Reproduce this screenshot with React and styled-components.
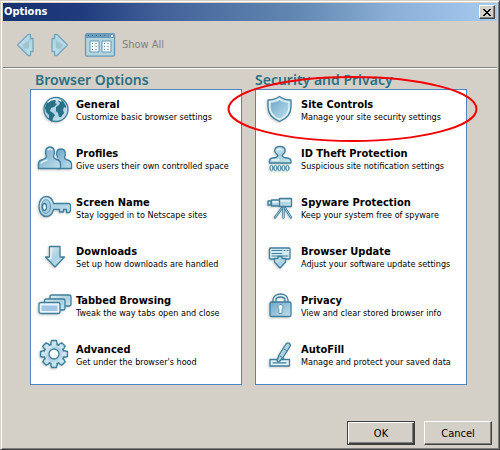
import React from "react";
import styled, { createGlobalStyle } from "styled-components";

const GlobalStyle = createGlobalStyle`
  *, *::before, *::after { box-sizing: border-box; }
  body { margin: 0; background: #d4d0c8; }
`;

const Dialog = styled.main`
  display: flex;
  flex-direction: column;
  min-height: 100vh;
  padding: 1px;
  background: #d4d0c8;
  border: 1px solid;
  border-color: #d4d0c8 #404040 #404040 #d4d0c8;
  box-shadow: inset 1px 1px #ffffff, inset -1px -1px #808080;
  font-family: "DejaVu Sans Condensed", "DejaVu Sans", sans-serif;
  color: #000000;
`;

const TitleBar = styled.header`
  display: flex;
  align-items: center;
  justify-content: space-between;
  height: 18px;
  margin: 1px;
  padding: 0 2px 0 1px;
  background: linear-gradient(90deg, #16316f 0%, #203c7e 16%, #426199 32%, #6289b2 60%, #8aaed5 78%, #a6caf0 100%);
`;

const Title = styled.h1`
  margin: 0;
  font-size: 11px;
  line-height: 18px;
  color: #ffffff;
`;

const CloseButton = styled.button`
  display: grid;
  place-items: center;
  width: 16px;
  height: 14px;
  padding: 0;
  background: #d4d0c8;
  border: 1px solid;
  border-color: #ffffff #404040 #404040 #ffffff;
  box-shadow: inset -1px -1px #808080;
`;

const Toolbar = styled.nav`
  display: flex;
  align-items: center;
  height: 46px;
  padding: 0 13px;
  margin: 0 1px;
  border-bottom: 1px solid #808080;
  box-shadow: 0 1px #ffffff;
`;

const ToolButton = styled.button`
  display: flex;
  align-items: center;
  gap: 6px;
  padding: 0;
  margin-right: ${(p) => p.$after || 0}px;
  background: none;
  border: 0;
  font-family: inherit;
  font-size: 11px;
  color: #808080;
`;

const Columns = styled.div`
  display: grid;
  grid-template-columns: 1fr 1fr;
  gap: 13px;
  padding: 3px 31px 0 28px;
`;

const Section = styled.section`
  position: relative;
`;

const Heading = styled.h2`
  margin: 0;
  padding-left: ${(p) => p.$inset}px;
  font-family: "Noto Sans", "DejaVu Sans", sans-serif;
  font-size: 14px;
  line-height: 18px;
  font-weight: 600;
  color: #2b7083;
  white-space: nowrap;
`;

const Panel = styled.ul`
  margin: 0;
  padding: 0;
  list-style: none;
  background: #ffffff;
  border: 1px solid #4b86c2;
`;

const Item = styled.li`
  height: 49px;
`;

const ItemLink = styled.a`
  display: flex;
  gap: 3px;
  padding: 2px 0 0 6px;
  color: inherit;
  text-decoration: none;
  white-space: nowrap;
`;

const ItemText = styled.span`
  display: flex;
  flex-direction: column;
  padding-top: 6px;
`;

const ItemTitle = styled.strong`
  font-size: 11px;
  line-height: 14px;
`;

const ItemNote = styled.span`
  font-size: 9px;
  line-height: 10px;
`;

const Highlight = styled.svg`
  position: absolute;
  left: -28px;
  top: 4px;
  width: 251px;
  height: 68px;
  pointer-events: none;
`;

const Footer = styled.footer`
  display: flex;
  justify-content: flex-end;
  gap: 9px;
  margin-top: auto;
  padding: 0 6px 3px;
`;

const PushButton = styled.button`
  width: 68px;
  height: 24px;
  padding: 0;
  background: #d4d0c8;
  border: 1px solid;
  border-color: ${(p) => (p.$primary ? "#404040" : "#ffffff #404040 #404040 #ffffff")};
  box-shadow: ${(p) =>
    p.$primary
      ? "inset 1px 1px #ffffff, inset -1px -1px #404040, inset -2px -2px #808080"
      : "inset -1px -1px #808080"};
  font-family: inherit;
  font-size: 11px;
`;

const IconSvg = styled.svg`
  flex: none;
  width: 36px;
  height: 36px;
  fill: url(#ice);
  stroke: #407f9b;
  stroke-width: 1.3;
  stroke-linejoin: round;
  stroke-linecap: round;
  filter: drop-shadow(-1px 1px 1px #00000030);
`;

const teeth = [0, 45, 90, 135, 180, 225, 270, 315];

const icons = {
  globe: (
    <>
      <circle cx="19" cy="17.500" r="12" />
      <g fill="#286f88" stroke="none">
        <path d="M9 12c2-3 5-5 8-5l2 2-1 2 2 1-3 3-3 1-1 3 3 2 2 2-2 3-1 4-3-3 0-4-3-3-1-4z" />
        <path d="M22 7l4 2 3 5 0 2-2-1-1 3 1 3-3 4-2 0-1-4-2-2 0-4 3-2 1-2-2-2z" />
      </g>
      <path d="M11 10c3-3 9-4 13-1" fill="none" stroke="#e8f5fa" />
    </>
  ),
  people: (
    <>
      <path d="M20 27.500h14.500v-4c0-3-2-4-4-4.500s-3-1-3-3c1.500-2 1.500-8-3.500-8s-5 5-3.500 8" fill="url(#deep)" />
      <path d="M1.500 27.500v-4.500c0-3 2-4 4.500-4.500 2-1 3-1 3.500-3-2-4-1-9.500 3.500-9.500s5.500 5.500 3.500 9.500c0 2 1.500 2 3 3 3 .5 4 1.500 4 4.500v4.500z" fill="url(#deep)" />
      <path d="M11 9c1-1.500 3-1.500 4 0M4 22c2-2 5-2 6-3" fill="none" stroke="#e8f5fa" />
    </>
  ),
  key: (
    <>
      <path d="M9.500 6.500c4 0 6 3 7 7h15.500q1.500 0 1.500 2v4q0 3-2 3h-2v-3h-3v2.500h-4v-2.500h-6c-1 4-3 7-7 7-4.500 0-7.500-4-7.500-10s3-10 7.500-10z" />
      <ellipse cx="9" cy="16.500" rx="4.500" ry="7" fill="#a9cde3" strokeWidth=".7" />
      <ellipse cx="7.500" cy="17" rx="2" ry="3.500" fill="#ffffff" />
    </>
  ),
  down: (
    <>
      <path d="M12.500 7.500h10.500v10.500h4.500l-9.500 10-9.500-10h4z" />
      <path d="M14 9.500v10h-2" fill="none" stroke="#eaf7fb" />
    </>
  ),
  tabs: (
    <>
      <rect x="13" y="7" width="21" height="11" rx="2" />
      <rect x="7.500" y="11" width="20.500" height="11" rx="2" />
      <rect x="2" y="14.500" width="21" height="11" rx="2" fill="#e9f5fb" />
      <rect x="4.500" y="17.500" width="16" height="5.500" fill="#9fc4e4" stroke="none" />
    </>
  ),
  gear: (
    <>
      {teeth.map((a) => (
        <path key={a} transform={`rotate(${a} 17 17)`} d="M13.500 8l1-4.500h5l1 4.500" />
      ))}
      <circle cx="17" cy="17" r="10" />
      {teeth.map((a) => (
        <path key={a} transform={`rotate(${a} 17 17)`} d="M14.500 9l.6-4h3.800l.6 4z" stroke="none" fill="#c9e4ef" />
      ))}
      <circle cx="17" cy="17" r="5" fill="#ffffff" />
    </>
  ),
  shield: (
    <>
      <path d="M6 8c5 0 8-1 11.500-3.500C21 7 24 8 29 8v7c0 7-5 12-11.500 14.500C11 27 6 22 6 15z" />
      <path d="M8 10c4 0 7-1 9.500-3 2.500 2 5.500 3 9.500 3v5c0 6-4 10-9.500 12.300C12 25 8 21 8 15z" fill="url(#deep)" stroke="#e4f3fa" />
    </>
  ),
  stamp: (
    <>
      <path d="M7.500 22v-2q0-2.500 3-3c3 0 5-1 5.500-3-5-3-4-8.500 2-8.500s7 5.500 2 8.500c.5 2 2.500 3 5.500 3q3.500 .5 3.500 3v2z" />
      <path d="M15.500 9c1-1.500 3-1.500 4 0M10 19h7" fill="none" stroke="#edf8fb" />
      {[9.5, 13.5, 17.5, 21.5, 25.5].map((x) => (
        <ellipse key={x} cx={x} cy="27" rx="1.500" ry="2.800" fill="#e6f4f7" strokeWidth="1" />
      ))}
    </>
  ),
  telescope: (
    <>
      <path d="M20 18l-7 9.500M21.500 18v9.500M23 18l6 9.500" fill="none" strokeWidth="2.400" />
      <path d="M20 18l-7 9.500M21.500 18v9.500M23 18l6 9.500" fill="none" stroke="#d5eaf2" strokeWidth=".7" />
      <path d="M6 11h3v4h-3zM9.500 10h8v6h-8zM17.500 8.500h12v8h-12z" />
      <path d="M19 11h9M11 12h5" stroke="#edf8fb" />
    </>
  ),
  update: (
    <>
      <rect x="7.500" y="9" width="20.500" height="11" rx="1" fill="#d5ebf4" />
      <path d="M10 11.500h10M22 11.500h1M25 11.500h1M10 14.500h10M10 17h16" fill="none" strokeWidth="1" />
      <path d="M12.500 19.500h3.500v-2h4v2h3.500v3.500l-5.500 6-5.500-6z" />
    </>
  ),
  lock: (
    <>
      <path d="M11 15v-3c0-8 15-8 15 0v3h-3v-3c0-4-9-4-9 0v3z" fill="#dceff5" />
      <rect x="8" y="14" width="21" height="14.500" rx="1.500" fill="url(#deep)" />
      <path d="M18.500 16.500c-2.500 0-3 3-1.500 4.500v4.500h3v-4.500c1.500-1.500 1-4.500-1.500-4.500z" fill="#ffffff" strokeWidth=".7" />
    </>
  ),
  pen: (
    <>
      <path d="M8 22.500h19.500v6.500h-19.500z" fill="#dff0f6" />
      <path d="M11 25.800h13" fill="none" />
      <path d="M15 24l2-6 7-11q2-2 3.500-.5t.5 3l-7 11-4 4.500z" />
      <path d="M18 19l4 2.500M22 12l3 2" fill="none" strokeWidth="1" />
    </>
  ),
};

const browserItems = [
  ["globe", "General", "Customize basic browser settings"],
  ["people", "Profiles", "Give users their own controlled space"],
  ["key", "Screen Name", "Stay logged in to Netscape sites"],
  ["down", "Downloads", "Set up how downloads are handled"],
  ["tabs", "Tabbed Browsing", "Tweak the way tabs open and close"],
  ["gear", "Advanced", "Get under the browser's hood"],
];

const securityItems = [
  ["shield", "Site Controls", "Manage your site security settings"],
  ["stamp", "ID Theft Protection", "Suspicious site notification settings"],
  ["telescope", "Spyware Protection", "Keep your system free of spyware"],
  ["update", "Browser Update", "Adjust your software update settings"],
  ["lock", "Privacy", "View and clear stored browser info"],
  ["pen", "AutoFill", "Manage and protect your saved data"],
];

function OptionList({ items }) {
  return (
    <Panel>
      {items.map(([icon, title, note]) => (
        <Item key={title}>
          <ItemLink href={`#${icon}`}>
            <IconSvg viewBox="0 0 36 36" aria-hidden="true">{icons[icon]}</IconSvg>
            <ItemText>
              <ItemTitle>{title}</ItemTitle>
              <ItemNote>{note}</ItemNote>
            </ItemText>
          </ItemLink>
        </Item>
      ))}
    </Panel>
  );
}

const arrow = "M1.500 12L12 1.500h2.500v4h2.500v13h-2.500v4h-2.500z";

export default function App() {
  return (
    <Dialog>
      <GlobalStyle />
      <TitleBar>
        <Title>Options</Title>
        <CloseButton aria-label="Close">
          <svg width="8" height="7" viewBox="0 0 8 7" shapeRendering="crispEdges" aria-hidden="true">
            <path d="M0 0h2v1h1v1h2v-1h1v-1h2v1h-1v1h-1v1h-1v1h1v1h1v1h1v1h-2v-1h-1v-1h-2v1h-1v1h-2v-1h1v-1h1v-1h1v-1h-1v-1h-1v-1h-1z" />
          </svg>
        </CloseButton>
      </TitleBar>
      <Toolbar>
        <ToolButton aria-label="Back" $after={13}>
          <svg width="20" height="24" viewBox="0 0 20 24" fill="url(#ice)" stroke="#75a5b9" strokeWidth="1.300" strokeLinejoin="round">
            <defs>
              <linearGradient id="ice" x1="0" y1="0" x2="1" y2="1">
                <stop offset="0" stopColor="#e6f4f9" />
                <stop offset="0.500" stopColor="#abd0e2" />
                <stop offset="1" stopColor="#c6e6ee" />
              </linearGradient>
              <linearGradient id="deep" x1="0" y1="0" x2="1" y2="1">
                <stop offset="0" stopColor="#6ea6c8" />
                <stop offset="1" stopColor="#bfe0ed" />
              </linearGradient>
            </defs>
            <path d={arrow} />
            <path d="M6 12l7-4v7l-4 1z" fill="#9cc5cc" stroke="none" />
          </svg>
        </ToolButton>
        <ToolButton aria-label="Forward" $after={15}>
          <svg width="20" height="24" viewBox="0 0 20 24" fill="url(#ice)" stroke="#75a5b9" strokeWidth="1.300" strokeLinejoin="round">
            <g transform="matrix(-1 0 0 1 20 0)">
              <path d={arrow} />
              <path d="M6 12l7-4v7l-4 1z" fill="#9cc5cc" stroke="none" />
            </g>
          </svg>
        </ToolButton>
        <ToolButton>
          <svg width="32" height="24" viewBox="0 0 32 24" aria-hidden="true">
            <rect x="1.500" y=".7" width="29" height="22.500" rx="1.500" fill="#b4d5e0" stroke="#6797b5" strokeWidth="1.300" />
            <path d="M2 1h28v4h-28z" fill="#6b9cbc" />
            <path d="M4 2.500h20" stroke="#416f8c" strokeDasharray="1 3" />
            <path d="M27 2h2v2h-2z" fill="#ffffff" />
            <path d="M6 8h9v11h-9zM18 8h9v11h-9z" fill="#f3f7f8" stroke="#6797b5" />
            <path d="M8 10.500h1M8 13.500h1M8 16.500h1M20 10.500h1M20 13.500h1M20 16.500h1" stroke="#5b8da8" />
            <path d="M11 10.500h2M11 13.500h2M11 16.500h2M23 10.500h2M23 13.500h2M23 16.500h2" stroke="#9db9c5" />
          </svg>
          Show All
        </ToolButton>
      </Toolbar>
      <Columns>
        <Section>
          <Heading $inset={5}>Browser Options</Heading>
          <OptionList items={browserItems} />
        </Section>
        <Section>
          <Heading $inset={0}>Security and Privacy</Heading>
          <OptionList items={securityItems} />
          <Highlight viewBox="0 0 251 68" aria-hidden="true">
            <ellipse cx="125.500" cy="34" rx="124" ry="32" fill="none" stroke="#f20000" strokeWidth="2" />
          </Highlight>
        </Section>
      </Columns>
      <Footer>
        <PushButton $primary>OK</PushButton>
        <PushButton>Cancel</PushButton>
      </Footer>
    </Dialog>
  );
}
